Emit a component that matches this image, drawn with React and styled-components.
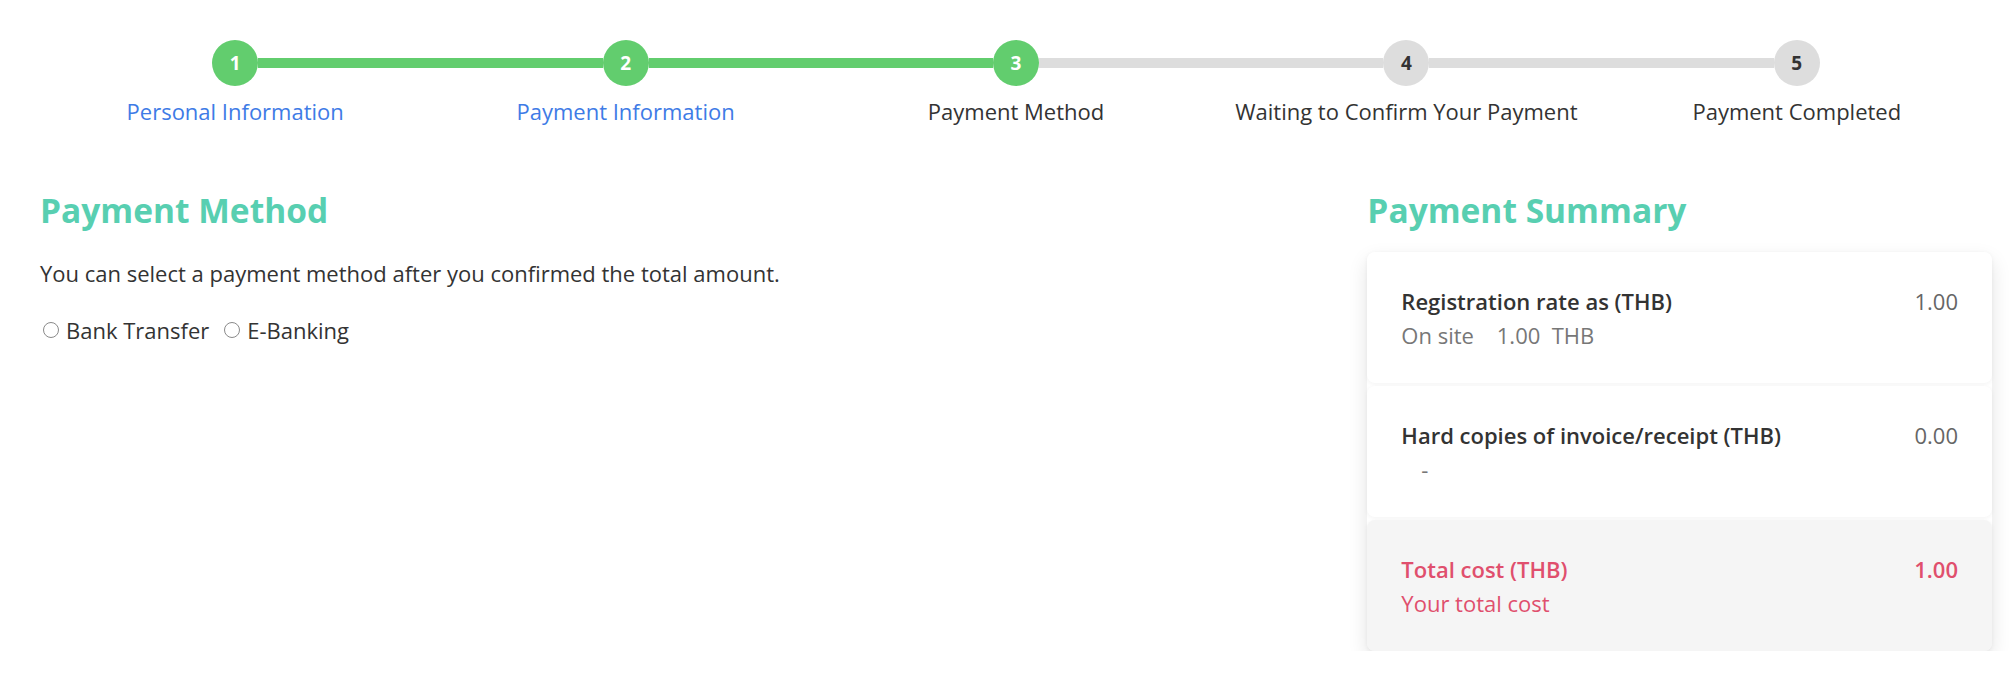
import styled, { createGlobalStyle } from "styled-components";

const steps = [
  { label: "Personal Information", done: true },
  { label: "Payment Information", done: true },
  { label: "Payment Method", done: true },
  { label: "Waiting to Confirm Your Payment", done: false },
  { label: "Payment Completed", done: false },
];

const current = 2;

const summary = [
  { title: "Registration rate as (THB)", sub: "On site    1.00  THB", value: "1.00" },
  { title: "Hard copies of invoice/receipt (THB)", sub: "-", value: "0.00", indent: true },
];

export default function App() {
  return (
    <Page>
      <GlobalStyle />
      <Stepper>
        {steps.map((step, i) => (
          <Step key={step.label}>
            <Track>
              <HalfLine $hidden={i === 0} $done={i <= current} />
              <Circle $done={step.done}>{i + 1}</Circle>
              <HalfLine $hidden={i === steps.length - 1} $done={i < current} />
            </Track>
            <StepLabel $link={i < current}>{step.label}</StepLabel>
          </Step>
        ))}
      </Stepper>

      <Columns>
        <div>
          <Heading>Payment Method</Heading>
          <Note>You can select a payment method after you confirmed the total amount.</Note>
          <Radios>
            <RadioLabel>
              <Radio type="radio" name="method" />
              Bank Transfer
            </RadioLabel>
            <RadioLabel>
              <Radio type="radio" name="method" />
              E-Banking
            </RadioLabel>
          </Radios>
        </div>

        <div>
          <Heading>Payment Summary</Heading>
          <Card>
            {summary.map((row) => (
              <Item key={row.title}>
                <ItemText>
                  <ItemTitle>{row.title}</ItemTitle>
                  <ItemSub $indent={row.indent}>{row.sub}</ItemSub>
                </ItemText>
                <ItemValue>{row.value}</ItemValue>
              </Item>
            ))}
            <Item $total>
              <ItemText>
                <ItemTitle $total>Total cost (THB)</ItemTitle>
                <ItemSub $total>Your total cost</ItemSub>
              </ItemText>
              <ItemValue $total>1.00</ItemValue>
            </Item>
          </Card>
        </div>
      </Columns>
    </Page>
  );
}

const GlobalStyle = createGlobalStyle`
  body {
    margin: 0;
    background: #ffffff;
    font-family: "Open Sans", "Noto Sans", sans-serif;
    color: #333333;
  }
`;

const Page = styled.div`
  width: 1952px;
  padding: 40px 24px 0 40px;
`;

const Stepper = styled.div`
  display: grid;
  grid-template-columns: repeat(5, 1fr);
`;

const Step = styled.div`
  display: flex;
  flex-direction: column;
  align-items: center;
`;

const Track = styled.div`
  width: 100%;
  display: flex;
  align-items: center;
`;

const HalfLine = styled.div`
  flex: 1;
  height: 10px;
  background: ${(p) => (p.$hidden ? "transparent" : p.$done ? "#62cd6e" : "#dddddd")};
`;

const Circle = styled.div`
  width: 46px;
  height: 46px;
  border-radius: 50%;
  display: flex;
  align-items: center;
  justify-content: center;
  font-size: 19px;
  font-weight: 700;
  background: ${(p) => (p.$done ? "#62cd6e" : "#dddddd")};
  color: ${(p) => (p.$done ? "#ffffff" : "#333333")};
`;

const StepLabel = styled.div`
  margin-top: 10px;
  font-size: 22px;
  line-height: 30px;
  color: ${(p) => (p.$link ? "#3e7be6" : "#333333")};
`;

const Columns = styled.div`
  display: grid;
  grid-template-columns: 68fr 32fr;
  margin-top: 64px;
`;

const Heading = styled.h2`
  margin: 0;
  font-size: 33.5px;
  line-height: 40px;
  font-weight: 700;
  color: #58cfb1;
`;

const Note = styled.p`
  margin: 28px 0 0;
  font-size: 22px;
  line-height: 30px;
`;

const Radios = styled.div`
  display: flex;
  gap: 12px;
  margin-top: 27px;
`;

const RadioLabel = styled.label`
  display: flex;
  align-items: center;
  gap: 7px;
  font-size: 22px;
  line-height: 30px;
`;

const Radio = styled.input`
  appearance: none;
  margin: 0 0 0 3px;
  width: 16px;
  height: 16px;
  border: 1px solid #8a8a8a;
  border-radius: 50%;
  background: #ffffff;
`;

const Card = styled.div`
  margin-top: 22px;
  border-radius: 8px;
  display: flex;
  flex-direction: column;
  gap: 3px;
  box-shadow: 0 8px 20px rgba(0, 0, 0, 0.11);
`;

const Item = styled.div`
  display: flex;
  justify-content: space-between;
  align-items: flex-start;
  padding: 32px 34px 31px;
  border-radius: 8px;
  background: ${(p) => (p.$total ? "#f5f5f5" : "#ffffff")};
  box-shadow: 0 1px 4px rgba(0, 0, 0, 0.05);
`;

const ItemText = styled.div`
  display: flex;
  flex-direction: column;
`;

const ItemTitle = styled.div`
  font-size: 22px;
  line-height: 34px;
  font-weight: 600;
  color: ${(p) => (p.$total ? "#e04f6d" : "#333333")};
`;

const ItemSub = styled.div`
  font-size: 22px;
  line-height: 34px;
  white-space: pre;
  padding-left: ${(p) => (p.$indent ? "20px" : "0")};
  color: ${(p) => (p.$total ? "#e04f6d" : "#777777")};
`;

const ItemValue = styled.div`
  font-size: 22px;
  line-height: 34px;
  font-weight: ${(p) => (p.$total ? 600 : 400)};
  color: ${(p) => (p.$total ? "#e04f6d" : "#666666")};
`;
